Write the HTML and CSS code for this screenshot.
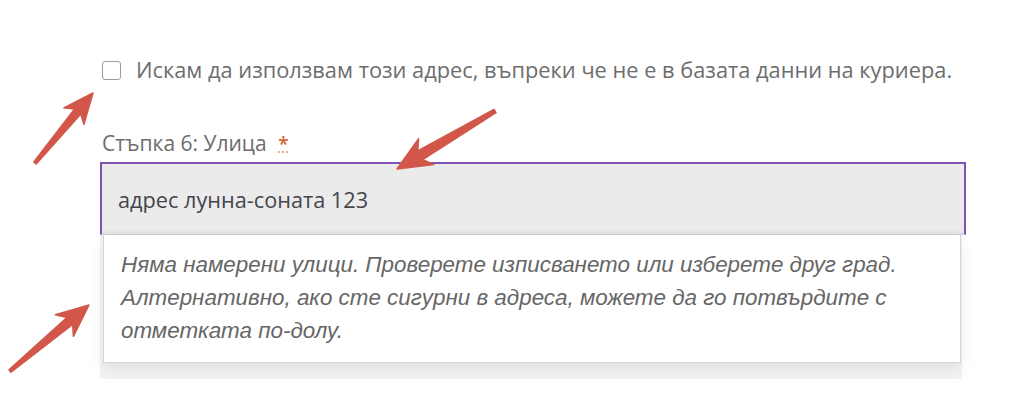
FILE: index.html
```html
<!DOCTYPE html>
<html lang="bg">
<head>
    <meta charset="UTF-8">
    <meta name="viewport" content="width=device-width, initial-scale=1.0">
    <title>Адрес за доставка</title>
<link rel="stylesheet" href="styles.css">
</head>
<body>
    <div class="form">
        <!-- Override for addresses missing in the courier's database -->
        <label class="check-row">
            <span class="box"></span>
            <span>Искам да използвам този адрес, въпреки че не е в базата данни на куриера.</span>
        </label>

        <div class="field">
            <div class="field-label">Стъпка 6: Улица <span class="req">*</span></div>
            <div class="street-input">адрес лунна-соната 123</div>
            <div class="results">
                <div class="message">Няма намерени улици. Проверете изписването или изберете друг град. Алтернативно, ако сте сигурни в адреса, можете да го потвърдите с отметката по-долу.</div>
            </div>
        </div>
    </div>

    <!-- Annotation arrows -->
    <svg class="arrows" width="1024" height="405" viewBox="0 0 1024 405">
        <polygon points="33.8,162 74.6,109 63.9,107.8 93,93 83.9,124.4 80.8,114.1 36.2,164"/>
        <polygon points="494,109.3 417.7,151 418.6,138.8 397,169 433.8,164.6 422.7,159.6 496,112.7"/>
        <polygon points="9,369.8 66.9,317.5 55.4,314.7 89,305 73.4,336.3 72.7,324.5 11,372.2"/>
    </svg>
</body>
</html>
```

FILE: styles.css
```css
body {
    margin: 0;
    background: #fff;
    font-family: 'Open Sans', sans-serif;
    color: #6d6d6d;
}
.form {
    width: 866px;
    margin-left: 100px;
    padding-top: 57px;
}
.check-row {
    display: flex;
    align-items: center;
    gap: 15px;
    padding-left: 2px;
    font-size: 21.8px;
    line-height: 26px;
}
.box {
    width: 17px;
    height: 17px;
    border: 1.5px solid #9b99a9;
    border-radius: 3px;
    flex-shrink: 0;
}
.field {
    margin-top: 47px;
}
.field-label {
    padding-left: 2px;
    font-size: 21px;
    line-height: 26px;
    margin-bottom: 5px;
}
.req {
    color: #d4642a;
    margin-left: 6px;
    font-size: 19px;
    font-weight: 600;
    text-decoration: underline dotted #e8a78a;
}
.street-input {
    height: 73px;
    box-sizing: border-box;
    display: flex;
    align-items: center;
    padding-left: 16px;
    border: 2px solid #7f54b3;
    border-bottom: 1px solid #cfcfcf;
    background: #ebebeb;
    box-shadow: inset 0 -3px 3px rgba(0, 0, 0, 0.03);
    font-size: 21.7px;
    color: #43454b;
}
.results {
    width: 858px;
    padding: 0 1px 16px 3px;
    background: #f3f3f3;
}
.message {
    padding: 13px 17px 15px;
    background: #fff;
    border: 1px solid #d5d5d5;
    border-top: none;
    box-shadow: 0 6px 14px rgba(0, 0, 0, 0.08);
    font-family: 'Liberation Sans', Arial, sans-serif;
    font-style: italic;
    font-size: 22.4px;
    line-height: 33px;
    color: #666;
}
.arrows {
    position: absolute;
    top: 0;
    left: 0;
    pointer-events: none;
}
.arrows polygon {
    fill: #d2574a;
    stroke: #d2574a;
    stroke-width: 1.5;
    stroke-linejoin: round;
}
```
